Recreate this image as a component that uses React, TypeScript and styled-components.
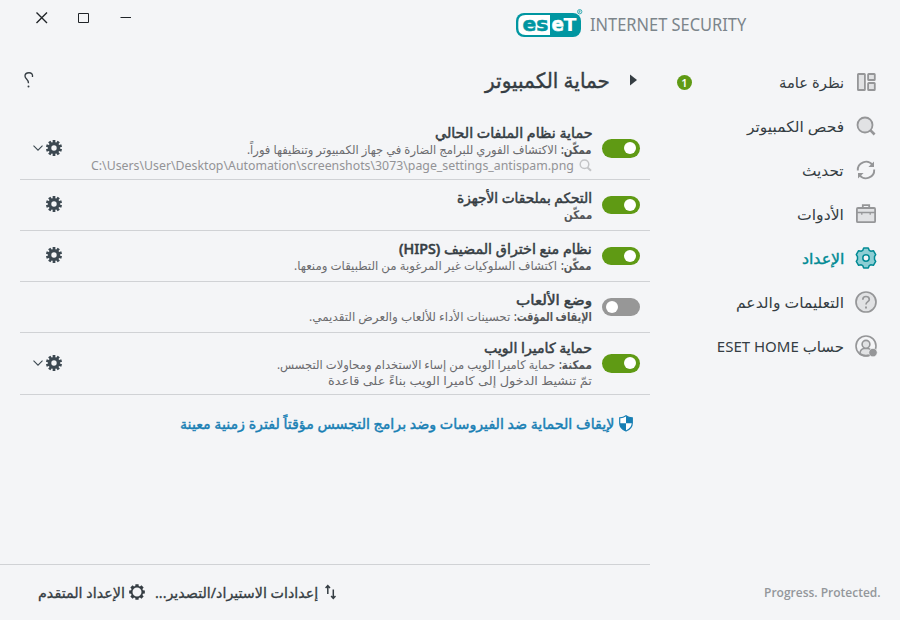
import React, { useLayoutEffect, useRef, useState } from "react";
import styled, { createGlobalStyle, css } from "styled-components";

const GlobalStyle = createGlobalStyle`
  * { box-sizing: border-box; }
  body { margin: 0; background: #f4f5f7; overflow: hidden; }
  svg { display: block; flex: none; }
`;

const ink = "#353d43";
const muted = "#6b6b6e";

const Window = styled.div`
  width: 900px;
  height: 620px;
  display: grid;
  grid-template-rows: 50px 1fr;
  background: #f4f5f7;
  color: ${ink};
  font-family: "Noto Sans", "DejaVu Sans", sans-serif;
  direction: rtl;
`;

const TitleBar = styled.header`
  display: flex;
  justify-content: space-between;
  padding: 0 154px 0 34px;
`;

const Brand = styled.div`
  display: flex;
  direction: ltr;
  align-items: flex-start;
  gap: 7px;
  padding-top: 8px;
`;

const Product = styled.div`
  display: flex;
  align-items: center;
  height: 32px;
  font: 400 18px/30px "Noto Sans", sans-serif;
  color: #7c858b;
`;

const Controls = styled.div`
  display: flex;
  direction: ltr;
  gap: 26px;
  padding-top: 10px;
`;

const Body = styled.div`
  display: grid;
  grid-template-columns: 250px 650px;
`;

const Side = styled.aside`
  display: flex;
  flex-direction: column;
  justify-content: space-between;
  padding: 10px 21px 0 20px;
`;

const Nav = styled.nav`
  display: flex;
  flex-direction: column;
`;

const NavItem = styled.a<{ $active?: boolean }>`
  display: flex;
  align-items: center;
  gap: 9px;
  height: 44px;
  font-size: 15px;
  color: ${(p) => (p.$active ? "#008a94" : ink)};
  ${(p) => p.$active && css`-webkit-text-stroke: 0.4px #008a94;`}
`;

const Badge = styled.span`
  width: 15px;
  height: 15px;
  margin-right: auto;
  margin-left: -13px;
  border-radius: 50%;
  background: #5f9a14;
  color: #fff;
  font: 600 11px/15px "Noto Sans", sans-serif;
  text-align: center;
`;

const BadgeSlot = styled.span`
  display: flex;
  flex: 1;
  padding-left: 20px;
`;

const Slogan = styled.div`
  display: flex;
  direction: ltr;
  justify-content: flex-end;
  height: 54px;
  font: 600 12px/54px "Open Sans", sans-serif;
  color: #93979b;
  margin-right: -2px;
`;

const Main = styled.main`
  display: flex;
  flex-direction: column;
`;

const PageHead = styled.div`
  display: flex;
  align-items: center;
  height: 68px;
  padding: 0 13px 8px 24px;
  gap: 20px;
  font-size: 21px;
  -webkit-text-stroke: 0.4px ${ink};
`;

const HelpSlot = styled.div`
  margin-right: auto;
`;

const Row = styled.section<{ $tall?: boolean }>`
  display: flex;
  align-items: center;
  gap: 10px;
  height: ${(p) => (p.$tall ? 62 : 51)}px;
  margin-left: 20px;
  padding: 0 10px 0 14px;
  border-bottom: 1px solid #d0d2d5;
`;

const Track = styled.span<{ $on: boolean; $tall: boolean }>`
  display: flex;
  flex: none;
  align-items: center;
  justify-content: ${(p) => (p.$on ? "flex-start" : "flex-end")};
  width: 38px;
  height: ${(p) => (p.$tall ? 19 : 18)}px;
  margin-bottom: ${(p) => (p.$tall ? 1 : 0)}px;
  padding: 0 4px;
  border-radius: 10px;
  background: ${(p) => (p.$on ? "#5f9a14" : "#979797")};
`;

const Knob = styled.span`
  width: 12px;
  height: 12px;
  border-radius: 50%;
  background: #fff;
`;

const Copy = styled.div`
  flex: 1;
  min-width: 0;
  padding-top: 1px;
`;

const RowTitle = styled.h2`
  display: flex;
  height: 18px;
  margin: 0;
  font-size: 14px;
  font-weight: 500;
  line-height: 17px;
  -webkit-text-stroke: 0.5px ${ink};
`;

const Line = styled.div<{ $pale?: boolean }>`
  display: flex;
  gap: 4px;
  height: ${(p) => (p.$pale ? 15 : 16)}px;
  margin-bottom: ${(p) => (p.$pale ? 1 : 0)}px;
  font-size: ${(p) => (p.$pale ? 13 : 12)}px;
  line-height: ${(p) => (p.$pale ? 15 : 16)}px;
  color: ${(p) => (p.$pale ? "#939396" : muted)};
  align-items: center;
`;

const Status = styled.b`
  display: flex;
  font-weight: 600;
  color: #55575a;
`;

const Actions = styled.div`
  display: flex;
  align-items: center;
  justify-content: flex-start;
  gap: 3px;
  width: 28px;
  padding-bottom: 2px;
`;

const PauseLink = styled.a`
  display: flex;
  align-items: center;
  gap: 5px;
  height: 56px;
  padding-right: 17px;
  font-size: 14px;
  font-weight: 500;
  color: #187fb4;
  -webkit-text-stroke: 0.45px #187fb4;
`;

const Footer = styled.footer`
  display: flex;
  align-items: center;
  height: 56px;
  margin-top: auto;
  padding-right: 314px;
  padding-bottom: 1px;
  gap: 10px;
  border-top: 1px solid #d0d2d5;
  font-size: 14px;
  -webkit-text-stroke: 0.3px ${ink};
`;

const FooterAction = styled.a<{ $gap: number }>`
  display: flex;
  align-items: center;
  gap: ${(p) => p.$gap}px;
`;

const FitBox = styled.span<{ $w: number; $ltr?: boolean }>`
  display: flex;
  flex: none;
  direction: ${(p) => (p.$ltr ? "ltr" : "rtl")};
  width: ${(p) => p.$w}px;
  white-space: nowrap;
`;

const FitInner = styled.span<{ $ltr?: boolean }>`
  flex: none;
  transform-origin: ${(p) => (p.$ltr ? "left" : "right")} center;
`;

/* Keeps a label at its column width whichever font is available. */
function Fit({ w, ltr, children }: { w: number; ltr?: boolean; children: React.ReactNode }) {
  const ref = useRef<HTMLSpanElement>(null);
  const [scale, setScale] = useState(1);
  useLayoutEffect(() => {
    if (ref.current) setScale(w / ref.current.offsetWidth);
  }, [w]);
  return (
    <FitBox $w={w} $ltr={ltr}>
      <FitInner ref={ref} $ltr={ltr} style={{ transform: `scaleX(${scale})` }}>{children}</FitInner>
    </FitBox>
  );
}

const gearPath = (cx: number, cy: number, n: number, r1: number, r2: number, root: number, tip: number) => {
  const pts: string[] = [];
  for (let i = 0; i < n; i++) {
    const a = (i / n) * Math.PI * 2 - Math.PI / 2;
    [[-root, r1], [-tip, r2], [tip, r2], [root, r1]].forEach(([d, r]) =>
      pts.push(`${(cx + Math.cos(a + d) * r).toFixed(2)} ${(cy + Math.sin(a + d) * r).toFixed(2)}`)
    );
  }
  return `M${pts.join("L")}Z`;
};

const Gear = () => (
  <svg width="16" height="16" viewBox="0 0 16 16">
    <path fill="#3c4851" fillRule="evenodd" d={gearPath(8, 8, 10, 6, 8.2, 0.22, 0.17) + "M8 5.3a2.7 2.7 0 1 0 0 5.4a2.7 2.7 0 0 0 0-5.4Z"} />
  </svg>
);

const GearOutline = () => (
  <svg width="16" height="16" viewBox="0 0 16 16">
    <path fill={ink} fillRule="evenodd" d={gearPath(8, 8, 8, 6.2, 8, 0.28, 0.2) + "M8 3.5a4.5 4.5 0 1 0 0 9a4.5 4.5 0 0 0 0-9Z"} />
  </svg>
);

const Chevron = () => (
  <svg width="10" height="6" viewBox="0 0 10 6">
    <path d="M.5.7 5 5.2 9.5.7" fill="none" stroke="#3c4851" strokeWidth="1.1" />
  </svg>
);

const Logo = () => (
  <svg width="67" height="30" viewBox="0 0 67 30">
    <rect x="0" y="5" width="65" height="24" rx="8" fill="#0096a1" />
    <path d="M34 7H9.500Q2.300 7 2.300 14v6q0 7 7.200 7H34Z" fill="#fff" />
    <g fontFamily="DejaVu Sans" fontWeight="700" fontSize="19">
      <text x="6.500" y="23" textLength="26" lengthAdjust="spacingAndGlyphs" fill="#0096a1" stroke="#0096a1" strokeWidth=".5">es</text>
      <text x="35.500" y="23" textLength="12.500" lengthAdjust="spacingAndGlyphs" fill="#fff" stroke="#fff" strokeWidth=".5">e</text>
      <text x="47.500" y="23" fontSize="17" textLength="13" lengthAdjust="spacingAndGlyphs" fill="#fff">T</text>
    </g>
    <circle cx="63.700" cy="3.700" r="2.200" fill="none" stroke="#2ba6ae" strokeWidth=".9" />
    <path d="M63 4.900V2.700h1.200v1H63l1.400 1.200" fill="none" stroke="#2ba6ae" strokeWidth=".6" />
  </svg>
);

const g = { fill: "#e1e2e4", stroke: "#959698", strokeWidth: 1.8 };

const icons: Record<string, React.ReactNode> = {
  overview: (
    <g {...g}>
      <rect x="2.900" y="3" width="7" height="16" rx=".6" />
      <rect x="13.100" y="3" width="6.700" height="6" rx=".6" />
      <rect x="13.100" y="12" width="6.700" height="7" rx=".6" />
    </g>
  ),
  scan: (
    <g {...g}>
      <circle cx="10" cy="10" r="7.500" />
      <path d="m15.300 15.200 4.300 4.300" strokeWidth="2.600" />
    </g>
  ),
  update: (
    <g fill="none" stroke="#959698" strokeWidth="1.900">
      <path d="M2.800 11.500A8.200 8.200 0 0 1 17.500 6M19.200 10.500A8.200 8.200 0 0 1 4.500 16" />
      <path d="M19 2.500v5.500h-5.600ZM3 19.500v-5.500h5.600Z" fill="#959698" stroke="none" />
    </g>
  ),
  tools: (
    <g {...g}>
      <path d="M7.800 5V2.200h6.400V5" fill="none" />
      <rect x="1.900" y="5" width="18.200" height="14.200" rx="1" />
      <path d="M2 9.500h18M6.800 9.500v2.200M15.200 9.500v2.200" strokeWidth="1.300" />
    </g>
  ),
  setup: (
    <g stroke="#008a94" strokeWidth="1.500" fill="#8dced4">
      <path strokeLinejoin="round" d="M8.700 1h4.600l.9 2.300 1.500.9 2.700-.5 2.300 3.900-1.200 2.100v2.600l1.200 2.100-2.300 3.900-2.700-.5-1.500.9-.9 2.300H8.700l-.9-2.300-1.500-.9-2.700.5-2.300-3.900 1.200-2.100V9.700L1.300 7.600l2.300-3.900 2.700.5 1.500-.9Z" />
      <circle cx="11" cy="11" r="3.200" fill="#f4f5f7" />
    </g>
  ),
  help: (
    <g {...g} strokeWidth="1.700">
      <circle cx="11" cy="11" r="10" />
      <path d="M7.800 8.700C7.800 6.600 9.200 5.500 11 5.500s3.300 1.100 3.300 2.900c0 2.300-3.300 2.300-3.300 5.100" fill="none" />
      <path d="M11 15.600v1.800" strokeWidth="1.900" />
    </g>
  ),
  account: (
    <g {...g} strokeWidth="1.600">
      <circle cx="11" cy="11" r="10" fill="none" />
      <path d="M5 18.700c0-3.200 1.700-4.800 3.800-5.200h4.400c2.100.4 3.800 2 3.800 5.200Q11 22.500 5 18.700Z" />
      <circle cx="11" cy="9.300" r="3.900" />
      <circle cx="18" cy="17.600" r="4.200" fill="#959698" stroke="#f4f5f7" strokeWidth=".6" />
    </g>
  ),
};

const NavIcon = ({ name }: { name: string }) => (
  <svg width="26" height="24" viewBox="-2 -1 26 24">{icons[name]}</svg>
);

const nav = [
  { icon: "overview", text: "نظرة عامة", w: 65, badge: "1" },
  { icon: "scan", text: "فحص الكمبيوتر", w: 97 },
  { icon: "update", text: "تحديث", w: 42 },
  { icon: "tools", text: "الأدوات", w: 47 },
  { icon: "setup", text: "الإعداد", w: 42, active: true },
  { icon: "help", text: "التعليمات والدعم", w: 108 },
  { icon: "account", text: "حساب ESET HOME", w: 127 },
];

type Item = {
  title: string; tw: number; status: string; sw: number; text?: string; w?: number;
  path?: string; note?: string; on: boolean; gear?: boolean; menu?: boolean;
};

const rows: Item[] = [
  { title: "حماية نظام الملفات الحالي", tw: 157, status: "ممكّن:", sw: 31, text: "الاكتشاف الفوري للبرامج الضارة في جهاز الكمبيوتر وتنظيفها فوراً.", w: 310, path: "C:\\Users\\User\\Desktop\\Automation\\screenshots\\3073\\page_settings_antispam.png", on: true, gear: true, menu: true },
  { title: "التحكم بملحقات الأجهزة", tw: 135, status: "ممكّن", sw: 28, on: true, gear: true },
  { title: "نظام منع اختراق المضيف (HIPS)", tw: 193, status: "ممكّن:", sw: 31, text: "اكتشاف السلوكيات غير المرغوبة من التطبيقات ومنعها.", w: 263, on: true, gear: true },
  { title: "وضع الألعاب", tw: 76, status: "الإيقاف المؤقت:", sw: 78, text: "تحسينات الأداء للألعاب والعرض التقديمي.", w: 201, on: false },
  { title: "حماية كاميرا الويب", tw: 108, status: "ممكنة:", sw: 33, text: "حماية كاميرا الويب من إساء الاستخدام ومحاولات التجسس.", w: 278, note: "تمّ تنشيط الدخول إلى كاميرا الويب بناءً على قاعدة", on: true, gear: true, menu: true },
];

export default function App() {
  return (
    <Window>
      <GlobalStyle />
      <TitleBar>
        <Brand>
          <Logo />
          <Product><Fit w={156} ltr>INTERNET SECURITY</Fit></Product>
        </Brand>
        <Controls>
          <svg width="16" height="16" viewBox="0 0 16 16"><path d="m2.500 2.500 10.500 10.500M13 2.500 2.500 13" stroke="#202428" strokeWidth="1.400" /></svg>
          <svg width="16" height="16" viewBox="0 0 16 16"><path d="M2.500 3.500h10v9h-10Z" fill="none" stroke="#202428" /></svg>
          <svg width="16" height="16" viewBox="0 0 16 16"><path d="M2.500 7.500h10.500" stroke="#202428" /></svg>
        </Controls>
      </TitleBar>
      <Body>
        <Side>
          <Nav>
            {nav.map((n) => (
              <NavItem key={n.icon} $active={n.active}>
                <NavIcon name={n.icon} />
                <Fit w={n.w}>{n.text}</Fit>
                {n.badge && <BadgeSlot><Badge>{n.badge}</Badge></BadgeSlot>}
              </NavItem>
            ))}
          </Nav>
          <Slogan><Fit w={117} ltr>Progress. Protected.</Fit></Slogan>
        </Side>
        <Main>
          <PageHead>
            <svg width="7" height="12" viewBox="0 0 7 12"><path d="M0 .5 7 6 0 11.500Z" fill={ink} /></svg>
            <Fit w={125}>حماية الكمبيوتر</Fit>
            <HelpSlot>
              <svg width="10" height="18" viewBox="0 0 10 18">
                <path d="M8.500 6C9 3 7.300 1.700 5 1.700S1 3 1 5c0 3.200 3.500 3 3.500 7.300" fill="none" stroke={ink} strokeWidth="1.350" />
                <circle cx="4.500" cy="15.500" r="1" fill={ink} />
              </svg>
            </HelpSlot>
          </PageHead>
          {rows.map((r) => {
            const tall = !!(r.path || r.note);
            return (
              <Row key={r.title} $tall={tall}>
                <Track $on={r.on} $tall={tall}><Knob /></Track>
                <Copy>
                  <RowTitle><Fit w={r.tw}>{r.title}</Fit></RowTitle>
                  <Line>
                    <Status><Fit w={r.sw}>{r.status}</Fit></Status>
                    {r.text && <Fit w={r.w!}>{r.text}</Fit>}
                  </Line>
                  {r.path && (
                    <Line $pale>
                      <svg width="14" height="13" viewBox="0 0 14 13"><g fill="none" stroke="#c3c4c6" strokeWidth="1.500"><circle cx="6.500" cy="5.200" r="4.300" /><path d="m9.500 8.400 3.500 3.300" strokeWidth="2" /></g></svg>
                      <Fit w={483} ltr>{r.path}</Fit>
                    </Line>
                  )}
                  {r.note && <Line><Fit w={264}>{r.note}</Fit></Line>}
                </Copy>
                <Actions>
                  {r.gear && <Gear />}
                  {r.menu && <Chevron />}
                </Actions>
              </Row>
            );
          })}
          <PauseLink>
            <svg width="14" height="17" viewBox="0 0 14 17">
              <path d="M7 .8C5 2.300 3 2.800.7 2.900v5C.7 11.800 3.500 14.500 7 16c3.500-1.500 6.300-4.200 6.300-8.100v-5C11 2.800 9 2.300 7 .8Z" fill="#fff" />
              <path d="M7 .8C9 2.300 11 2.800 13.300 2.900v5.300H7ZM7 8.200H.7C.7 11.800 3.500 14.500 7 16Z" fill="#187fb4" />
              <path d="M7 .8C5 2.300 3 2.800.7 2.900v5C.7 11.800 3.500 14.500 7 16c3.500-1.500 6.300-4.200 6.300-8.100v-5C11 2.800 9 2.300 7 .8Z" fill="none" stroke="#187fb4" strokeWidth="1.200" />
            </svg>
            <Fit w={434}>لإيقاف الحماية ضد الفيروسات وضد برامج التجسس مؤقتاً لفترة زمنية معينة</Fit>
          </PauseLink>
          <Footer>
            <FooterAction $gap={7}>
              <svg width="11" height="16" viewBox="0 0 11 16"><path d="M2.800 10V1.500M.6 4l2.200-2.400L5 4M8.300 5.500v8.500M6.100 12l2.200 2.400 2.200-2.400" fill="none" stroke={ink} strokeWidth="1.500" /></svg>
              <Fit w={163}>إعدادات الاستيراد/التصدير...</Fit>
            </FooterAction>
            <FooterAction $gap={4}>
              <GearOutline />
              <Fit w={87}>الإعداد المتقدم</Fit>
            </FooterAction>
          </Footer>
        </Main>
      </Body>
    </Window>
  );
}
